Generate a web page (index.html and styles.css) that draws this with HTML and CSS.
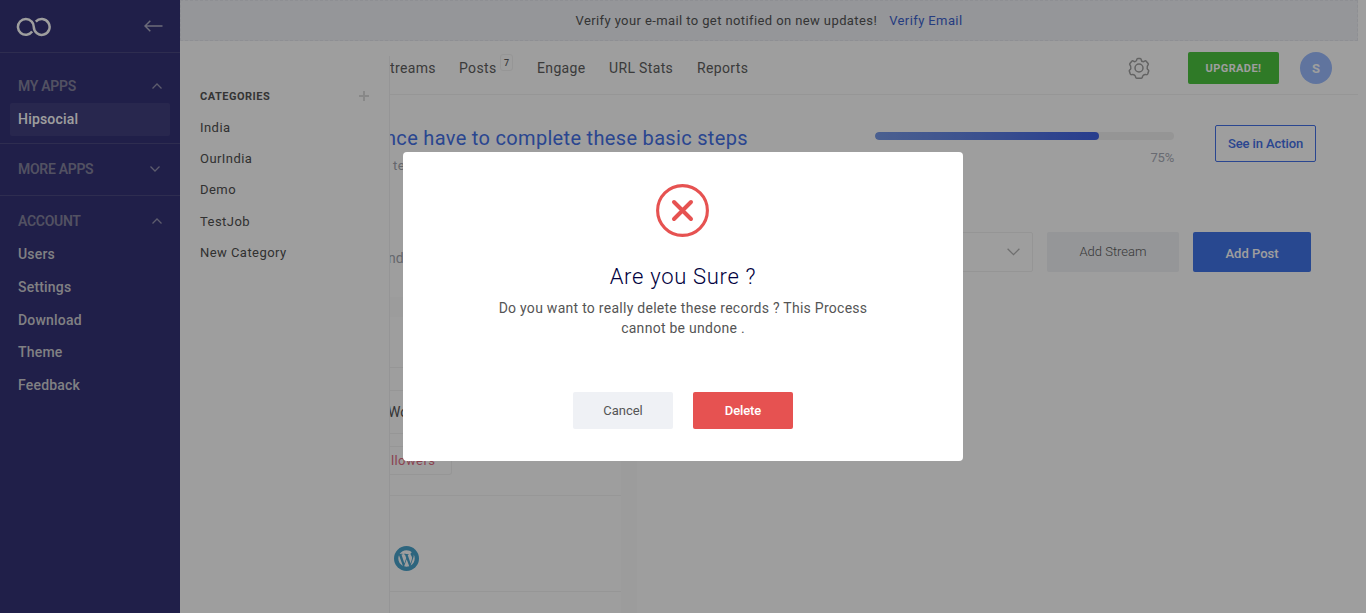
FILE: index.html
```html
<!DOCTYPE html>
<html lang="en">
<head>
<meta charset="utf-8">
<title>Hipsocial</title>
<link rel="stylesheet" href="styles.css">
</head>
<body>
<div class="app">
  <aside class="sidebar">
    <div class="brand">
      <svg class="logo" width="36" height="20" viewBox="0 0 36 20" fill="none" stroke="#fff" stroke-width="2.5">
        <path d="M16.200 14.600A7.900 7.900 0 1 1 15.600 4.500C17.100 5.900 17.800 7.800 17.800 10A7.900 7.900 0 1 0 19.800 4.700"/>
      </svg>
      <svg class="back" width="19" height="12" viewBox="0 0 19 12" fill="none" stroke="#aeadc4" stroke-width="1.5"><path d="M18.500 6H1M6.300 .8L1 6L6.300 11.200"/></svg>
    </div>
    <section class="group first">
      <div class="head">MY APPS<svg width="10" height="6" viewBox="0 0 10 6"><path d="M.5 5.500L5 1L9.500 5.500"/></svg></div>
      <a class="item active">Hipsocial</a>
    </section>
    <section class="group">
      <div class="head more">MORE APPS<svg width="10" height="6" viewBox="0 0 10 6"><path d="M.5 .5L5 5L9.500 .5"/></svg></div>
    </section>
    <section class="group last">
      <div class="head">ACCOUNT<svg width="10" height="6" viewBox="0 0 10 6"><path d="M.5 5.500L5 1L9.500 5.500"/></svg></div>
      <a class="item">Users</a>
      <a class="item">Settings</a>
      <a class="item">Download</a>
      <a class="item">Theme</a>
      <a class="item">Feedback</a>
    </section>
  </aside>

  <main class="main">
    <div class="verify"><span>Verify your e-mail to get notified on new updates!</span><a>Verify Email</a></div>
    <div class="body">
      <aside class="categories">
        <div class="cat-head">CATEGORIES<svg width="10" height="10" viewBox="0 0 10 10" fill="none" stroke="#dcdcdc" stroke-width="2"><path d="M5 0V10M0 5H10"/></svg></div>
        <a>India</a><a>OurIndia</a><a>Demo</a><a>TestJob</a><a>New Category</a>
      </aside>
      <div class="content">
        <nav class="topnav">
          <a class="n-streams">treams</a>
          <a class="n-posts">Posts</a><span class="count">7</span>
          <a class="n-engage">Engage</a>
          <a class="n-url">URL Stats</a>
          <a>Reports</a>
          <svg class="gear" width="22" height="22" viewBox="0 0 22 22" fill="none" stroke="#a0a0a0" stroke-width="1.500" stroke-linejoin="round">
            <path d="M9.800 .8h2.400q.8 0 .9.900q.2 2 1.700 2.300q.8.200 1.700-.4q1.100-.7 1.700 0l1.900 2.200q.5.700 0 1.400q-1.400 1.800-.9 3.800q.2.800 1 1.300q.7.500.5 1.200l-1 2.900q-.4.800-1.200.6q-2-.6-3.400.9q-.6.600-.8 1.800q-.2.900-1 .9H8.700q-.8 0-1-.9q-.2-1.200-.8-1.800q-1.400-1.500-3.400-.9q-.8.200-1.200-.6l-1-2.900q-.2-.7.500-1.200q.8-.5 1-1.300q.5-2-.9-3.800q-.5-.7 0-1.400l1.900-2.200q.6-.7 1.700 0q.9.600 1.700.4q1.500-.3 1.700-2.300q.1-.9.900-.9z" transform="translate(0 .6)"/>
            <circle cx="11" cy="11" r="4"/>
          </svg>
          <button class="upgrade">UPGRADE!</button>
          <span class="avatar">S</span>
        </nav>
        <div class="steps">
          <div class="steps-text"><h2>nce have to complete these basic steps</h2><p>te</p></div>
          <div class="progress"><div class="track"><div class="fill" style="width:75%"></div></div><span>75%</span></div>
          <button class="see">See in Action</button>
        </div>
        <div class="toolbar">
          <span class="crumb">ndi</span>
          <div class="select"><svg width="13" height="8" viewBox="0 0 13 8" fill="none" stroke="#b4b4b4" stroke-width="1.300"><path d="M.6 .8L6.500 6.700L12.400 .8"/></svg></div>
          <button class="add-stream">Add Stream</button>
          <button class="add-post">Add Post</button>
        </div>
        <div class="board">
          <div class="stream">
            <div class="band"></div>
            <div class="row-a"></div>
            <div class="gap-a"></div>
            <div class="row-b">Wo</div>
            <div class="tag-row"><span class="tag">llowers</span></div>
            <div class="account">
              <svg width="25" height="25" viewBox="0 0 25 25">
                <circle cx="12.500" cy="12.500" r="12.500" fill="#4aa3cc"/>
                <path fill="#fff" transform="translate(3.380 3.380) scale(.76)" d="M21.469 6.825c.84 1.537 1.318 3.300 1.318 5.175 0 3.979-2.156 7.456-5.363 9.325l3.295-9.527c.615-1.540.820-2.771.820-3.864 0-.405-.026-.780-.070-1.110m-7.981.105c.647-.030 1.232-.105 1.232-.105.582-.075.514-.930-.067-.899 0 0-1.755.135-2.880.135-1.064 0-2.850-.150-2.850-.150-.585-.030-.661.855-.075.885 0 0 .540.061 1.125.090l1.680 4.605-2.370 7.080L5.354 6.900c.649-.030 1.234-.100 1.234-.100.585-.075.516-.930-.065-.896 0 0-1.746.138-2.874.138-.200 0-.438-.008-.690-.015C4.911 3.150 8.235 1.215 12 1.215c2.809 0 5.365 1.072 7.286 2.833-.046-.003-.091-.009-.141-.009-1.060 0-1.812.923-1.812 1.914 0 .890.513 1.643 1.060 2.531.411.720.890 1.643.890 2.977 0 .915-.354 1.994-.821 3.479l-1.075 3.585-3.900-11.610zM12 22.784c-1.059 0-2.081-.153-3.048-.437l3.237-9.406 3.315 9.087c.024.053.050.101.078.149-1.120.393-2.325.609-3.582.609M1.211 12c0-1.564.336-3.050.935-4.390L7.290 21.709C3.694 19.960 1.212 16.271 1.211 12"/>
              </svg>
            </div>
          </div>
          <div class="gutter"></div>
        </div>
      </div>
    </div>
  </main>
</div>

<div class="overlay">
  <div class="modal">
    <svg class="cross" width="53" height="53" viewBox="0 0 53 53" fill="none" stroke="#e65251"><circle cx="26.500" cy="26.500" r="24.900" stroke-width="3.100"/><path d="M18 18L35 35M35 18L18 35" stroke-width="4" stroke-linecap="round"/></svg>
    <h1>Are you Sure ?</h1>
    <p>Do you want to really delete these records ? This Process cannot be undone .</p>
    <div class="actions"><button class="cancel">Cancel</button><button class="delete">Delete</button></div>
  </div>
</div>
</body>
</html>
```
FILE: styles.css
```css
* { box-sizing: border-box; }
body { margin: 0; font-family: Roboto, "Liberation Sans", sans-serif; color: #555; background: #fff; overflow: hidden; }
button { font: inherit; border: 0; padding: 0; border-radius: 2px; }
h1, h2, p { margin: 0; }
svg { flex: none; }
.app { display: flex; height: 613px; }

.sidebar { width: 180px; flex: none; background: #343276; font-size: 14px; font-weight: 500; letter-spacing: .2px; }
.brand { height: 53px; padding: 1px 17px 0 16px; display: flex; align-items: center; justify-content: space-between; border-bottom: 1px solid #4b4981; }
.back { margin-bottom: 2px; }
.group { padding: 8px 0 9px; border-bottom: 1px solid #4b4981; }
.group.first { padding: 16px 0 7px; }
.group.last { border: 0; }
.head { height: 34px; padding: 0 18px; display: flex; align-items: center; justify-content: space-between; color: #85849f; font-weight: 600; letter-spacing: -.3px; }
.head.more { padding-right: 20px; }
.head svg { fill: none; stroke: #9695b0; stroke-width: 1.3; }
.item { display: flex; align-items: center; height: 32.7px; padding-left: 18px; color: #cfcfd4; }
.item.active { height: 33px; margin: 0 10px; padding: 0 0 2px 8px; color: #fff; background: #413f7f; border-radius: 2px; }

.main { width: 1178px; display: flex; flex-direction: column; }
.verify { height: 41px; flex: none; display: flex; align-items: center; justify-content: center; gap: 12px; background: #f0f2f7; border: 1px dashed #e5e7ed; font-size: 13px; letter-spacing: .4px; }
.verify a { color: #3d63cf; letter-spacing: .4px; }
.body { display: flex; flex: 1; min-height: 0; }
.categories { width: 210px; flex: none; margin-top: 15px; border-right: 1px solid #f1f1f3; padding: 24px 20px 0; font-size: 13px; letter-spacing: .45px; }
.cat-head { height: 32px; display: flex; align-items: center; justify-content: space-between; font-size: 11px; font-weight: 700; letter-spacing: .5px; }
.categories a { display: flex; align-items: center; height: 31.2px; color: #4f4f4f; }

.content { flex: 1; min-width: 0; overflow: hidden; white-space: nowrap; }
.topnav { height: 54px; display: flex; align-items: center; border-bottom: 1px solid #f2f2f2; font-size: 14px; letter-spacing: .35px; color: #606060; }
.n-streams { width: 69px; }
.n-posts { width: 41px; }
.count { width: 13px; height: 17px; margin: -11px 24px 0 0; border: 1px solid #f2f2f2; border-radius: 3px; font-size: 9px; font-weight: 500; line-height: 16px; text-align: center; letter-spacing: 0; }
.n-engage { width: 72px; }
.n-url { width: 88px; }
.gear { margin-left: auto; }
.upgrade { width: 91px; height: 32px; margin: 0 21px 0 38px; padding-top: 1px; background: #4cc53f; color: #fff; font-size: 11px; font-weight: 700; letter-spacing: .4px; }
.avatar { width: 32px; height: 32px; margin-right: 26px; border-radius: 50%; background: #9bbcff; color: #fff; font-size: 13px; font-weight: 700; line-height: 33px; text-align: center; letter-spacing: 0; }

.steps { height: 137px; display: flex; align-items: flex-start; padding: 30px 42px 0 0; }
.steps-text { flex: 1; }
.steps-text h2 { margin-left: -5px; font-size: 20px; font-weight: 400; line-height: 26px; letter-spacing: .32px; color: #4571e8; }
.steps-text p { margin: 5px 0 0 3px; font-size: 13px; line-height: 20px; letter-spacing: .4px; color: #a3a6ae; }
.progress { width: 299px; margin-right: 41px; padding-top: 7px; text-align: right; }
.track { height: 8px; border-radius: 4px; background: #f1f1f1; overflow: hidden; }
.fill { height: 8px; border-radius: 4px; background: linear-gradient(90deg, #799be8, #4163e4); }
.progress span { display: block; margin-top: 9px; font-size: 13px; line-height: 17px; letter-spacing: -.2px; color: #a9adb8; }
.see { width: 101px; height: 37px; border: 1px solid #4571e8; background: transparent; color: #4571e8; font-size: 13px; font-weight: 500; letter-spacing: -.1px; }

.toolbar { height: 40px; display: flex; padding-right: 47px; }
.crumb { flex: 1; margin-left: -2px; font-size: 14px; line-height: 52px; color: #a3a6ae; }
.select { width: 386px; height: 40px; border: 1px solid #f1f1f1; border-radius: 2px; padding-right: 12px; display: flex; align-items: center; justify-content: flex-end; }
.add-stream { width: 132px; margin: 0 14px; padding-bottom: 1px; background: #f0f2f5; color: #5c5c5c; font-size: 13px; font-weight: 300; letter-spacing: 0; }
.add-post { width: 118px; background: #4274e9; color: #fff; font-size: 13px; font-weight: 500; letter-spacing: 0; padding-top: 3px; }

.board { display: flex; height: 341px; padding-top: 25px; }
.stream { width: 231px; }
.gutter { width: 16px; background: #fcfcfc; }
.band { height: 20px; background: #fcfcfc; }
.row-a { height: 51px; border-bottom: 1px solid #f2f2f2; }
.gap-a { height: 23px; border-bottom: 1px solid #f2f2f2; }
.row-b { height: 43px; margin-left: -2px; line-height: 42px; border-bottom: 1px solid #f2f2f2; font-size: 14px; }
.tag-row { height: 62px; padding-top: 12px; border-bottom: 1px solid #f4f4f4; }
.tag { display: block; width: 62px; height: 29px; border: 1px solid #f2f2f2; border-left: 0; border-radius: 0 3px 3px 0; padding-left: 1px; font-size: 13px; line-height: 27px; letter-spacing: .4px; color: #e06b82; }
.account { height: 96px; padding: 50px 4px 0; border-bottom: 1px solid #f2f2f2; }
.account svg { display: block; }

.overlay { position: fixed; inset: 0; background: rgba(0, 0, 0, .38); display: flex; align-items: center; justify-content: center; }
.modal { width: 560px; height: 309px; padding-top: 32px; border-radius: 4px; background: #fff; display: flex; flex-direction: column; align-items: center; text-align: center; }
.cross { margin-right: 1px; }
.modal h1 { margin-top: 25px; font-size: 22px; line-height: 30px; font-weight: 300; letter-spacing: .7px; color: #010140; }
.modal p { width: 380px; margin-top: 6px; font-size: 14px; line-height: 20px; letter-spacing: .27px; color: #555; }
.actions { display: flex; gap: 20px; margin-top: 54px; }
.actions button { width: 100px; height: 37px; font-size: 13px; }
.cancel { background: #eff1f5; color: #555; }
.delete { background: #e65251; color: #fff; }
.actions .delete { font-weight: 500; letter-spacing: -.1px; }
```
